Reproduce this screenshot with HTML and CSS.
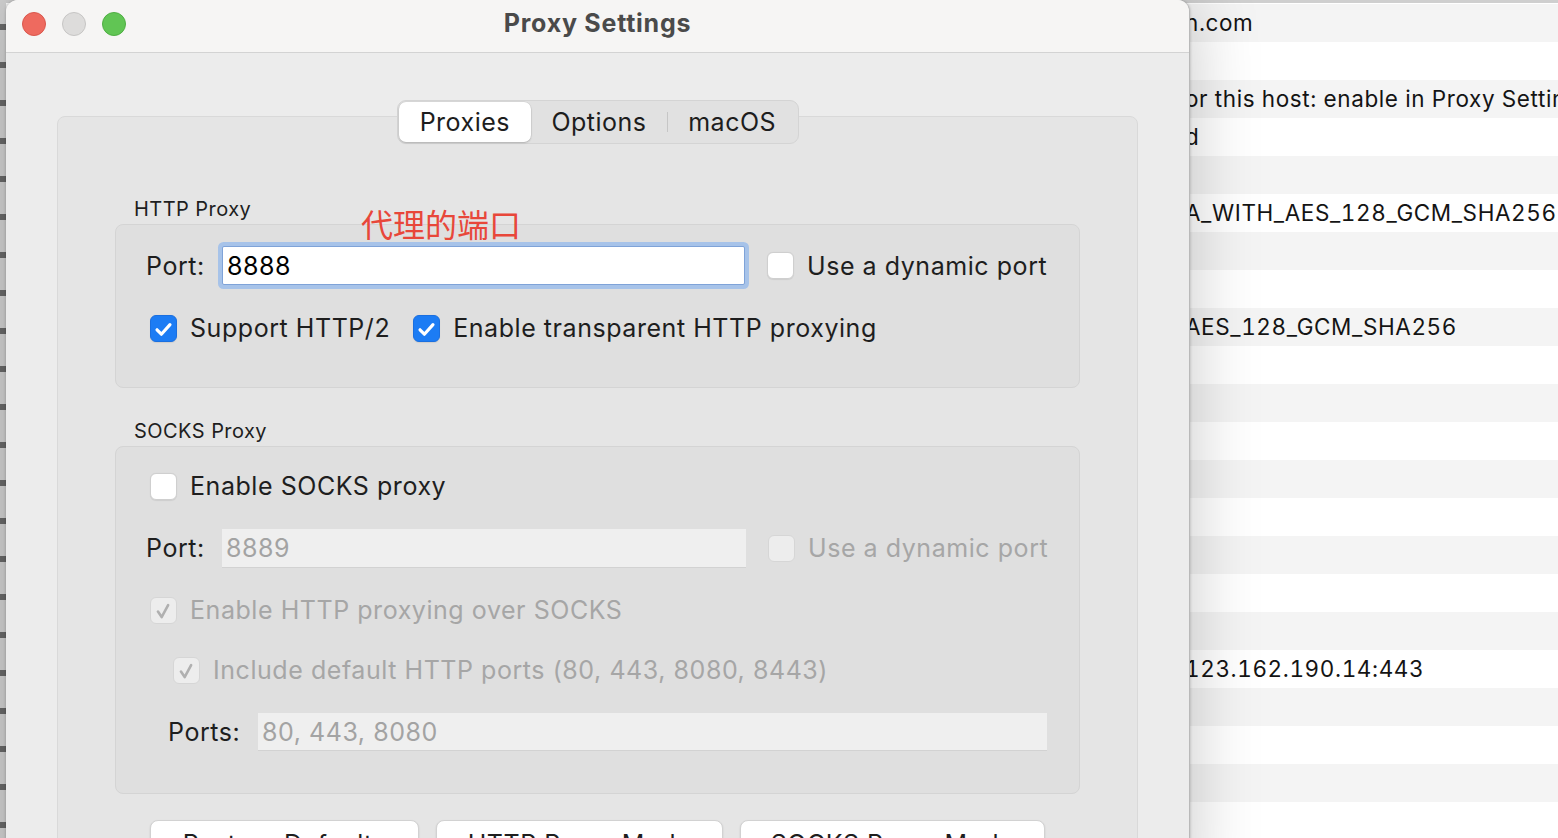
FILE: index.html
```html
<!DOCTYPE html>
<html>
<head>
<meta charset="utf-8">
<link rel="stylesheet" href="styles.css">
</head>
<body>
<div class="screen">
  <div class="strip"></div>
  <div class="list">
    <div class="lrow">n.com</div>
    <div class="lrow"></div>
    <div class="lrow">or this host: enable in Proxy Settings</div>
    <div class="lrow">d</div>
    <div class="lrow"></div>
    <div class="lrow">A_WITH_AES_128_GCM_SHA256</div>
    <div class="lrow"></div>
    <div class="lrow"></div>
    <div class="lrow">AES_128_GCM_SHA256</div>
    <div class="lrow"></div>
    <div class="lrow"></div>
    <div class="lrow"></div>
    <div class="lrow"></div>
    <div class="lrow"></div>
    <div class="lrow"></div>
    <div class="lrow"></div>
    <div class="lrow"></div>
    <div class="lrow">123.162.190.14:443</div>
    <div class="lrow"></div>
    <div class="lrow"></div>
    <div class="lrow"></div>
    <div class="lrow"></div>
    <div class="lrow"></div>
  </div>

  <div class="window">
    <div class="titlebar">
      <div class="lights">
        <span class="light red"></span>
        <span class="light gray"></span>
        <span class="light green"></span>
      </div>
      <div class="title">Proxy Settings</div>
    </div>
    <div class="content">
      <div class="tabs">
        <div class="seg selected">Proxies</div>
        <div class="seg">Options</div>
        <div class="sep"></div>
        <div class="seg">macOS</div>
      </div>
      <div class="tabbox">
        <div class="annot">代理的端口</div>

        <div class="group-label">HTTP Proxy</div>
        <div class="group g1">
          <div class="row row-port">
            <span class="lbl">Port:</span>
            <div class="field focus">8888</div>
            <div class="check dyn"><span class="box"></span><span>Use a dynamic port</span></div>
          </div>
          <div class="row row-2">
            <div class="check"><span class="box on"><svg viewBox="0 0 27 27"><path d="M6.5 13.8 L11.2 18.6 L20.5 8.2" /></svg></span><span>Support HTTP/2</span></div>
            <div class="check second"><span class="box on"><svg viewBox="0 0 27 27"><path d="M6.5 13.8 L11.2 18.6 L20.5 8.2" /></svg></span><span>Enable transparent HTTP proxying</span></div>
          </div>
        </div>

        <div class="group-label gl2">SOCKS Proxy</div>
        <div class="group g2">
          <div class="row">
            <div class="check"><span class="box"></span><span>Enable SOCKS proxy</span></div>
          </div>
          <div class="row">
            <span class="lbl">Port:</span>
            <div class="field disabled f-socks">8889</div>
            <div class="check dyn off"><span class="box"></span><span>Use a dynamic port</span></div>
          </div>
          <div class="row">
            <div class="check off"><span class="box dis-on"><svg viewBox="0 0 27 27"><path d="M7.5 13.5 L11.5 19.5 L18.5 6.5" /></svg></span><span>Enable HTTP proxying over SOCKS</span></div>
          </div>
          <div class="row row-inc">
            <div class="check off"><span class="box dis-on"><svg viewBox="0 0 27 27"><path d="M7.5 13.5 L11.5 19.5 L18.5 6.5" /></svg></span><span>Include default HTTP ports (80, 443, 8080, 8443)</span></div>
          </div>
          <div class="row row-ports">
            <span class="lbl lbl-ports">Ports:</span>
            <div class="field disabled f-ports">80, 443, 8080</div>
          </div>
        </div>

        <div class="buttons">
          <div class="btn b1">Restore Defaults</div>
          <div class="btn b2">HTTP Proxy Mode</div>
          <div class="btn b3">SOCKS Proxy Mode</div>
        </div>
      </div>
    </div>
  </div>
</div>
</body>
</html>
```
FILE: styles.css
```css
* { box-sizing: border-box; }
html, body { margin: 0; padding: 0; }
body {
  width: 1558px;
  height: 838px;
  overflow: hidden;
  background: #ffffff;
  font-family: "Inter", "Noto Sans", sans-serif;
  color: #1f1f1f;
}
.screen {
  position: relative;
  width: 1558px;
  height: 838px;
  overflow: hidden;
  display: flex;
}
.strip {
  width: 6px;
  flex: none;
  background:
    repeating-linear-gradient(to bottom, transparent 0 24px, #6a6a6a 24px 30px, transparent 30px 38px),
    #d2d2d2;
}
.list {
  flex: 1;
  border-top: 3px solid #cfcfcf;
  padding-top: 1px;
}
.lrow {
  height: 38px;
  line-height: 38px;
  font-size: 22.5px;
  letter-spacing: 0.6px;
  font-variant-numeric: tabular-nums;
  color: #141414;
  padding-left: 1179px;
  white-space: nowrap;
  overflow: hidden;
}
.lrow:nth-child(odd) { background: #f4f4f4; }
.lrow:nth-child(even) { background: #ffffff; }

/* window */
.window {
  position: absolute;
  left: 6px;
  top: 0;
  width: 1184px;
  height: 900px;
  background: #ececec;
  border-radius: 12px 12px 0 0;
  border-right: 1px solid #b9b9b9;
  box-shadow: 0 0 70px rgba(0,0,0,0.22), 0 0 3px rgba(0,0,0,0.25);
  overflow: hidden;
}
.titlebar {
  position: relative;
  height: 53px;
  background: #f6f5f4;
  border-bottom: 1px solid #d3d3d3;
  display: flex;
  align-items: center;
  justify-content: center;
}
.lights {
  position: absolute;
  left: 16px;
  top: 12px;
  display: flex;
  gap: 16px;
}
.light {
  width: 24px;
  height: 24px;
  border-radius: 50%;
  display: block;
}
.light.red { background: #ee6a5f; border: 1px solid #d9574d; }
.light.gray { background: #dddcdb; border: 1px solid #c6c5c4; }
.light.green { background: #61c554; border: 1px solid #4fae43; }
.title {
  font-weight: 700;
  font-size: 25px;
  letter-spacing: 0.75px;
  color: #4a4a4a;
  margin-top: -6px;
}

.content {
  padding-top: 47px;
}
.tabs {
  position: relative;
  z-index: 2;
  margin: 0 auto;
  width: 402px;
  height: 44px;
  background: #e1e1e1;
  border: 1px solid #d4d4d4;
  border-radius: 9px;
  display: flex;
  align-items: center;
  padding: 1px;
  font-size: 25px;
  letter-spacing: 0.5px;
  color: #1d1d1d;
}
.seg {
  height: 40px;
  display: flex;
  align-items: center;
  justify-content: center;
}
.seg:nth-child(1) { width: 133px; }
.seg:nth-child(2) { width: 136px; }
.seg:nth-child(4) { width: 129px; }
.seg.selected {
  background: #ffffff;
  border-radius: 7px;
  box-shadow: 0 1px 2px rgba(0,0,0,0.18), 0 0 0 0.5px rgba(0,0,0,0.08);
}
.sep {
  width: 1px;
  height: 20px;
  background: #c6c6c6;
}

.tabbox {
  position: relative;
  margin: -28px 51px 0;
  background: #e5e5e5;
  border: 1px solid #d9d9d9;
  border-radius: 8px;
  padding: 80px 57px 0;
  height: 900px;
}
.annot {
  position: absolute;
  left: 303px;
  top: 88px;
  font-family: "Noto Sans CJK SC", sans-serif;
  font-size: 32px;
  line-height: 36px;
  color: #e8473a;
}
.group-label {
  font-size: 20px;
  letter-spacing: 0.45px;
  line-height: 24px;
  height: 24px;
  padding-left: 19px;
  margin-bottom: 3px;
  color: #1e1e1e;
}
.gl2 { margin-top: 31px; }
.group {
  background: #dfdfdf;
  border: 1px solid #d4d4d4;
  border-radius: 8px;
}
.g1 { padding: 17px 0 39px 30px; }
.g2 { padding: 19px 0 41px 30px; }
.row {
  display: flex;
  align-items: center;
  height: 40px;
  font-size: 25px;
  letter-spacing: 0.55px;
}
.g2 .row + .row { margin-top: 22px; }
.g2 .row.row-inc { margin-top: 20px; }
.row-port { height: 47px; }
.row-2 { margin-top: 19px; }
.lbl { width: 76px; flex: none; color: #1e1e1e; }
.field {
  height: 39px;
  display: flex;
  align-items: center;
  padding-left: 4px;
}
.field.focus {
  width: 523px;
  background: #ffffff;
  border: 1px solid #7fa3d8;
  box-shadow: 0 0 0 4px #a7c3e9;
  color: #000;
  border-radius: 2px;
}
.field.disabled {
  background: #efefef;
  border-bottom: 1px solid #d2d2d2;
  color: #a3a3a3;
}
.f-socks { width: 524px; }
.f-ports { width: 789px; height: 38px; }
.lbl-ports { margin-left: 22px; width: 90px; }

.check {
  display: flex;
  align-items: center;
  gap: 13px;
  padding-left: 4px;
  color: #1e1e1e;
}
.check.dyn { margin-left: 18px; }
.check.second { margin-left: 19px; }
.check.off { color: #a6a6a6; }
.row-inc .check { padding-left: 27px; }
.box {
  width: 27px;
  height: 27px;
  border-radius: 6px;
  background: #ffffff;
  border: 1px solid #cfcfcf;
  box-shadow: 0 0.5px 1px rgba(0,0,0,0.08);
  flex: none;
  display: flex;
}
.box svg { width: 27px; height: 27px; }
.box.on {
  background: #1c7cf4;
  border-color: #1a6fe0;
}
.box.on svg path {
  fill: none;
  stroke: #ffffff;
  stroke-width: 3.4;
  stroke-linecap: round;
  stroke-linejoin: round;
}
.check.off .box {
  background: #ededed;
  border-color: #d6d6d6;
  box-shadow: none;
}
.box.dis-on svg path {
  fill: none;
  stroke: #b0b0b0;
  stroke-width: 2.8;
  stroke-linecap: round;
  stroke-linejoin: round;
}

.buttons {
  display: flex;
  justify-content: center;
  gap: 17px;
  margin-top: 26px;
}
.btn {
  height: 44px;
  background: #ffffff;
  border: 1px solid #d2d2d2;
  border-radius: 8px;
  box-shadow: 0 1px 2px rgba(0,0,0,0.12);
  font-size: 25px;
  letter-spacing: 0.55px;
  display: flex;
  align-items: center;
  justify-content: center;
  color: #1e1e1e;
  padding-top: 4px;
}
.b1 { width: 269px; }
.b2 { width: 287px; }
.b3 { width: 305px; }
```
